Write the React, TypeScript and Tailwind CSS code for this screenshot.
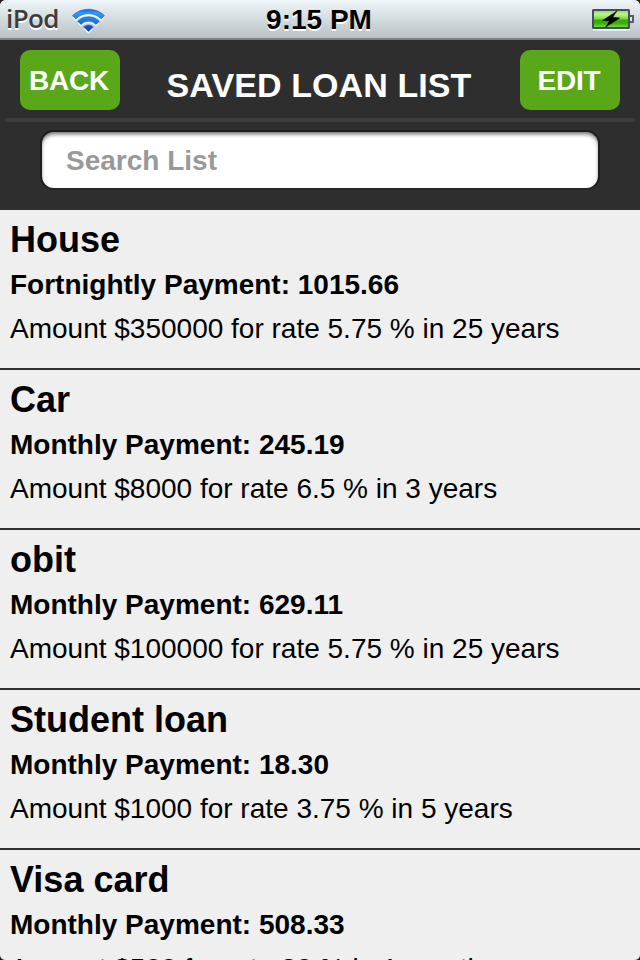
import { useState } from "react";

const loans = [
  { name: "House", payment: "Fortnightly Payment: 1015.66", detail: "Amount $350000 for rate 5.75 % in 25 years" },
  { name: "Car", payment: "Monthly Payment: 245.19", detail: "Amount $8000 for rate 6.5 % in 3 years" },
  { name: "obit", payment: "Monthly Payment: 629.11", detail: "Amount $100000 for rate 5.75 % in 25 years" },
  { name: "Student loan", payment: "Monthly Payment: 18.30", detail: "Amount $1000 for rate 3.75 % in 5 years" },
  { name: "Visa card", payment: "Monthly Payment: 508.33", detail: "Amount $500 for rate 20 % in 1 months" },
];

const wifiPaths = [
  "M0.5 7.6A23.2 23.2 0 0 1 32.5 7.6L29.3 10.9A18.4 18.4 0 0 0 3.7 10.9Z",
  "M5.7 13.2A15.4 15.4 0 0 1 27.3 13.2L24.1 16.5A10.8 10.8 0 0 0 8.9 16.5Z",
  "M11.7 18.9A7 7 0 0 1 21.3 18.9L16.5 23.6Z",
];

function WifiIcon() {
  return (
    <svg width="34" height="26" viewBox="0 0 34 26" fill="none">
      <defs>
        <linearGradient id="wifi" x1="0" y1="0" x2="0" y2="24" gradientUnits="userSpaceOnUse">
          <stop offset="0" stopColor="#0a4fc4" />
          <stop offset="0.2" stopColor="#2f9df5" />
          <stop offset="0.5" stopColor="#1c7aea" />
          <stop offset="1" stopColor="#0838c0" />
        </linearGradient>
      </defs>
      <g transform="translate(0 2)" fill="#fff">
        {wifiPaths.map((d) => (
          <path key={d} d={d} />
        ))}
      </g>
      <g fill="url(#wifi)" stroke="#1560d8" strokeWidth="0.6">
        {wifiPaths.map((d) => (
          <path key={d} d={d} />
        ))}
      </g>
    </svg>
  );
}

function BatteryIcon() {
  return (
    <svg width="44" height="22" viewBox="0 0 44 22">
      <defs>
        <linearGradient id="charge" x1="0" y1="0" x2="0" y2="1">
          <stop offset="0" stopColor="#8bdc4f" />
          <stop offset="0.25" stopColor="#b8f58a" />
          <stop offset="0.48" stopColor="#7ade3c" />
          <stop offset="0.56" stopColor="#38a80a" />
          <stop offset="0.75" stopColor="#3cb30c" />
          <stop offset="1" stopColor="#80e83f" />
        </linearGradient>
      </defs>
      <path d="M1 20.5H38" stroke="#fff" strokeWidth="2" />
      <rect x="1" y="1" width="36" height="18" rx="0.5" fill="url(#charge)" stroke="#454b63" strokeWidth="2" />
      <path d="M38 7h3v6h-3" fill="#dfe4e7" stroke="#555b70" strokeWidth="2" />
      <path d="M25 2L10.5 11.5L17.5 12L13.5 18.2L27.8 9L20.8 8.2Z" fill="#000" stroke="#000" strokeWidth="0.5" />
    </svg>
  );
}

function StatusBar() {
  return (
    <div className="grid h-10 shrink-0 grid-cols-[1fr_auto_1fr] border-b-2 border-[#79838a] bg-linear-to-b from-[#f0f7fa] to-[#bac1c5]">
      <div className="flex items-start pl-[6px]">
        <span className="w-[66px] pt-[2px] font-['Open_Sans',sans-serif] text-[26px] leading-8 font-semibold tracking-[-0.6px] text-[#3d3d3d] [text-shadow:0_2px_0_#fff]">
          iPod
        </span>
        <div className="pt-2">
          <WifiIcon />
        </div>
      </div>
      <span className="mr-[2px] pt-1 text-[28px] leading-8 font-bold [text-shadow:0_2px_0_#fff]">9:15 PM</span>
      <div className="flex justify-end pt-[9px] pr-1">
        <BatteryIcon />
      </div>
    </div>
  );
}

function NavButton({ label }: { label: string }) {
  return (
    <button className="h-[60px] w-[100px] rounded-[10px] bg-[#5aa71a] pt-px pr-[2px] text-[28px] leading-[60px] font-bold tracking-[-0.2px] text-white">
      {label}
    </button>
  );
}

export default function App() {
  const [query, setQuery] = useState("");

  return (
    <div className="h-[960px] w-[640px] overflow-hidden bg-[#1c1c1c] font-['Liberation_Sans',Arial,sans-serif] text-black">
      <div className="flex h-full flex-col overflow-hidden rounded-t-md rounded-b-[5px] bg-[#efefef]">
        <StatusBar />

        {/* Header with title and search */}
        <header className="h-[170px] shrink-0 bg-[#2e2e2e]">
          <div className="mx-[5px] flex h-[82px] items-start justify-between border-b-4 border-[#3b3b3b] px-[15px] pt-[10px]">
            <NavButton label="BACK" />
            <h1 className="pt-[15px] pr-[2px] text-[34px] leading-10 font-bold tracking-[0.1px] text-white">
              SAVED LOAN LIST
            </h1>
            <NavButton label="EDIT" />
          </div>
          <div className="px-10 pt-2">
            <input
              value={query}
              onChange={(e) => setQuery(e.target.value)}
              placeholder="Search List"
              className="h-[60px] w-full rounded-[14px] border-2 border-[#1d1d1d] border-b-[#282828] bg-white px-6 pt-[2px] text-[28px] font-bold shadow-[inset_0_3px_4px_-1px_#0009] outline-none placeholder:text-[#999]"
            />
          </div>
        </header>

        {/* Loans */}
        <ul>
          {loans.map((loan) => (
            <li key={loan.name} className="h-40 border-b-2 border-[#2e2e2e] pt-2 pl-[10px] whitespace-nowrap">
              <h2 className="mb-px text-[36px] leading-[44px] font-bold">{loan.name}</h2>
              <p className="text-[28px] leading-[44px] font-bold">{loan.payment}</p>
              <p className="text-[28px] leading-[44px]">{loan.detail}</p>
            </li>
          ))}
        </ul>
      </div>
    </div>
  );
}
